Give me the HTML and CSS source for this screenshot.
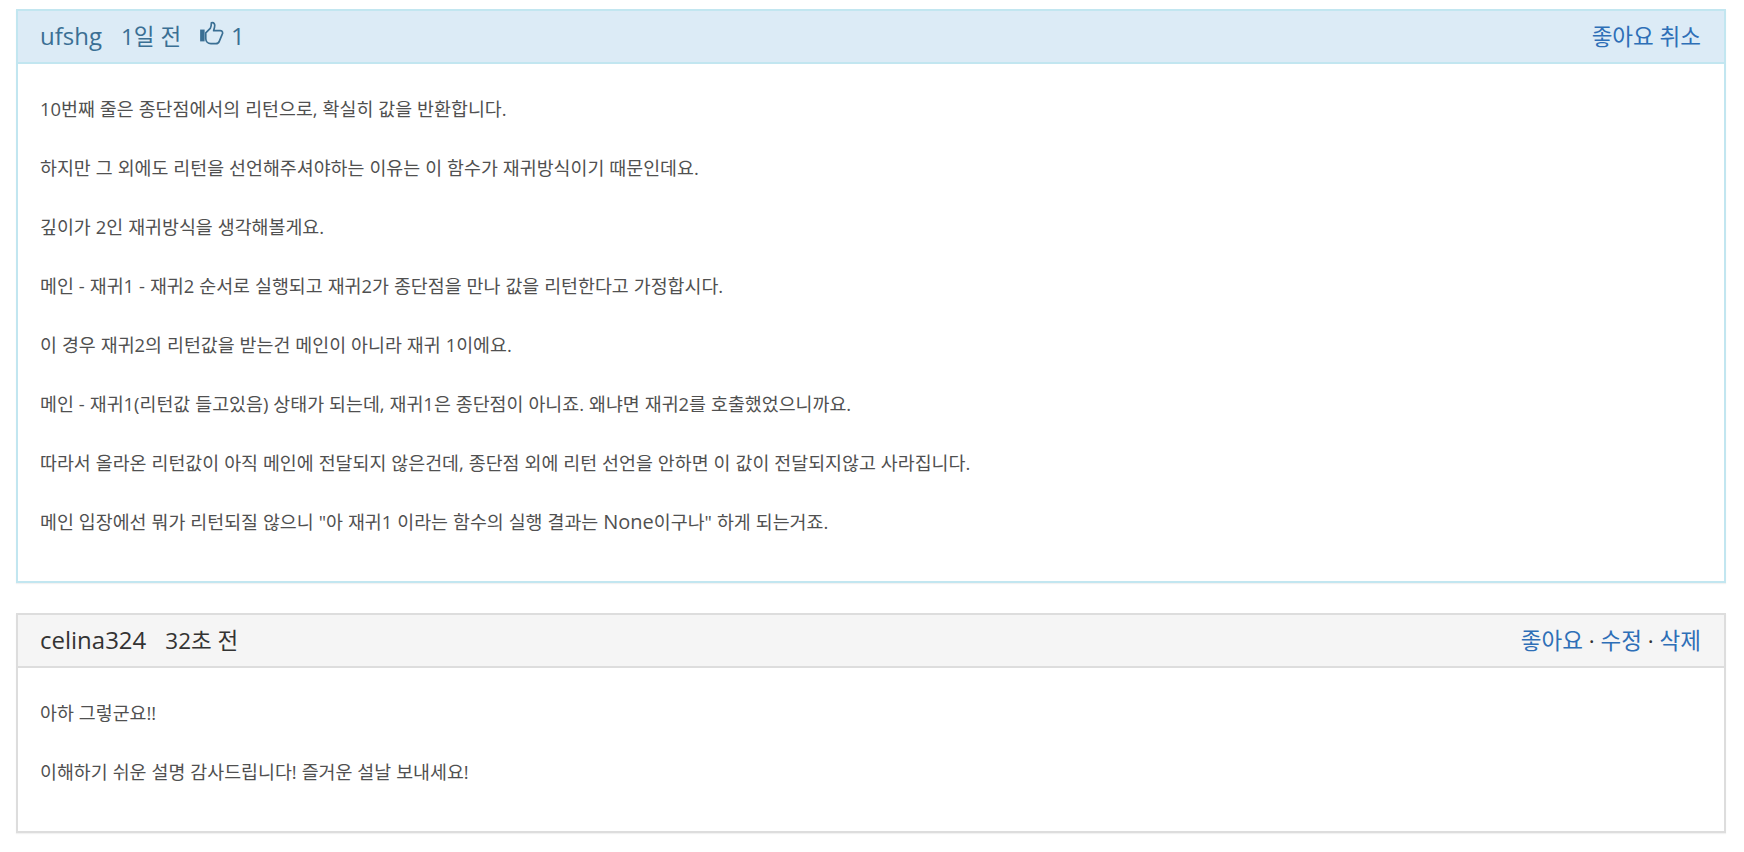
FILE: index.html
```html
<!DOCTYPE html>
<html lang="ko">
<head>
    <meta charset="utf-8">
    <link rel="stylesheet" href="styles.css">
    <title>Comments</title>
</head>
<body>
<div class="comments">
    <div class="panel panel-best">
        <div class="panel-heading">
            <div class="panel-title">
                <span class="author">ufshg</span>
                <span class="time">1일 전</span>
                <span class="likes">
                    <svg class="thumb" viewBox="0 0 24 24" width="27" height="27">
                        <rect x="1" y="8.5" width="4" height="10.5" fill="currentColor"/>
                        <path d="M6 11.5 L10 7.5 C11 6 11 4.5 11 2.5 C13.5 2 14.5 4 13.8 6.5 L13 9.5 L19 9.5 C21 9.5 21.5 11.5 20.5 13 L18 19 C17.5 20.5 16.5 21 15 21 L10.5 21 C8 21 6 19 6 16.5 Z" fill="none" stroke="currentColor" stroke-width="1.5" stroke-linejoin="round"/>
                    </svg>
                    <span class="like-count">1</span>
                </span>
            </div>
            <div class="panel-actions">
                <a href="#">좋아요 취소</a>
            </div>
        </div>
        <div class="panel-body">
            <p>10번째 줄은 종단점에서의 리턴으로, 확실히 값을 반환합니다.</p>
            <p>하지만 그 외에도 리턴을 선언해주셔야하는 이유는 이 함수가 재귀방식이기 때문인데요.</p>
            <p>깊이가 2인 재귀방식을 생각해볼게요.</p>
            <p>메인 - 재귀1 - 재귀2 순서로 실행되고 재귀2가 종단점을 만나 값을 리턴한다고 가정합시다.</p>
            <p>이 경우 재귀2의 리턴값을 받는건 메인이 아니라 재귀 1이에요.</p>
            <p>메인 - 재귀1(리턴값 들고있음) 상태가 되는데, 재귀1은 종단점이 아니죠. 왜냐면 재귀2를 호출했었으니까요.</p>
            <p>따라서 올라온 리턴값이 아직 메인에 전달되지 않은건데, 종단점 외에 리턴 선언을 안하면 이 값이 전달되지않고 사라집니다.</p>
            <p>메인 입장에선 뭐가 리턴되질 않으니 "아 재귀1 이라는 함수의 실행 결과는 <span class="en">None</span>이구나" 하게 되는거죠.</p>
        </div>
    </div>
    <div class="panel panel-default">
        <div class="panel-heading">
            <div class="panel-title">
                <span class="author">celina324</span>
                <span class="time">32초 전</span>
            </div>
            <div class="panel-actions">
                <a href="#">좋아요</a> · <a href="#">수정</a> · <a href="#">삭제</a>
            </div>
        </div>
        <div class="panel-body">
            <p>아하 그렇군요!!</p>
            <p>이해하기 쉬운 설명 감사드립니다! 즐거운 설날 보내세요!</p>
        </div>
    </div>
</div>
</body>
</html>
```

FILE: styles.css
```css
body {
  margin: 0;
  font-family: "Open Sans", "Noto Sans CJK KR", sans-serif;
  font-size: 18.4px;
  color: #505050;
  background-color: #ffffff;
}

.comments {
  padding: 9px 18px 0 16px;
}

.panel {
  margin-bottom: 30px;
  border: 2px solid #dddddd;
  box-shadow: 0 1px 1px rgba(0, 0, 0, 0.05);
}

.panel-heading {
  display: flex;
  justify-content: space-between;
  align-items: center;
  height: 48px;
  padding: 0 23px 3px 22px;
  border-bottom: 2px solid #dddddd;
  font-size: 22.5px;
  color: #333333;
}

.panel-title {
  display: flex;
  align-items: center;
}

.author {
  font-size: 24px;
}

.time {
  margin-left: 19px;
}

.likes {
  display: flex;
  align-items: center;
  margin-left: 18px;
  gap: 5px;
}

.like-count {
  font-size: 24px;
}

.thumb {
  display: block;
  margin-top: -3px;
}

.panel-actions a {
  color: #2e6fb7;
  text-decoration: none;
}

.panel-default {
  border-color: #dddddd;
}

.panel-default .panel-heading {
  background-color: #f5f5f5;
  border-bottom-color: #dddddd;
}

.panel-best {
  border-color: #c2e6f0;
}

.panel-best .panel-heading {
  background-color: #dcebf6;
  border-bottom-color: #c2e6f0;
  color: #3a6f94;
}

.panel-body {
  padding: 33px 22px 12px 22px;
}

.panel-body p {
  margin: 0 0 35px;
  line-height: 24px;
  word-spacing: 0.2px;
}

.en {
  font-size: 20px;
}
```
